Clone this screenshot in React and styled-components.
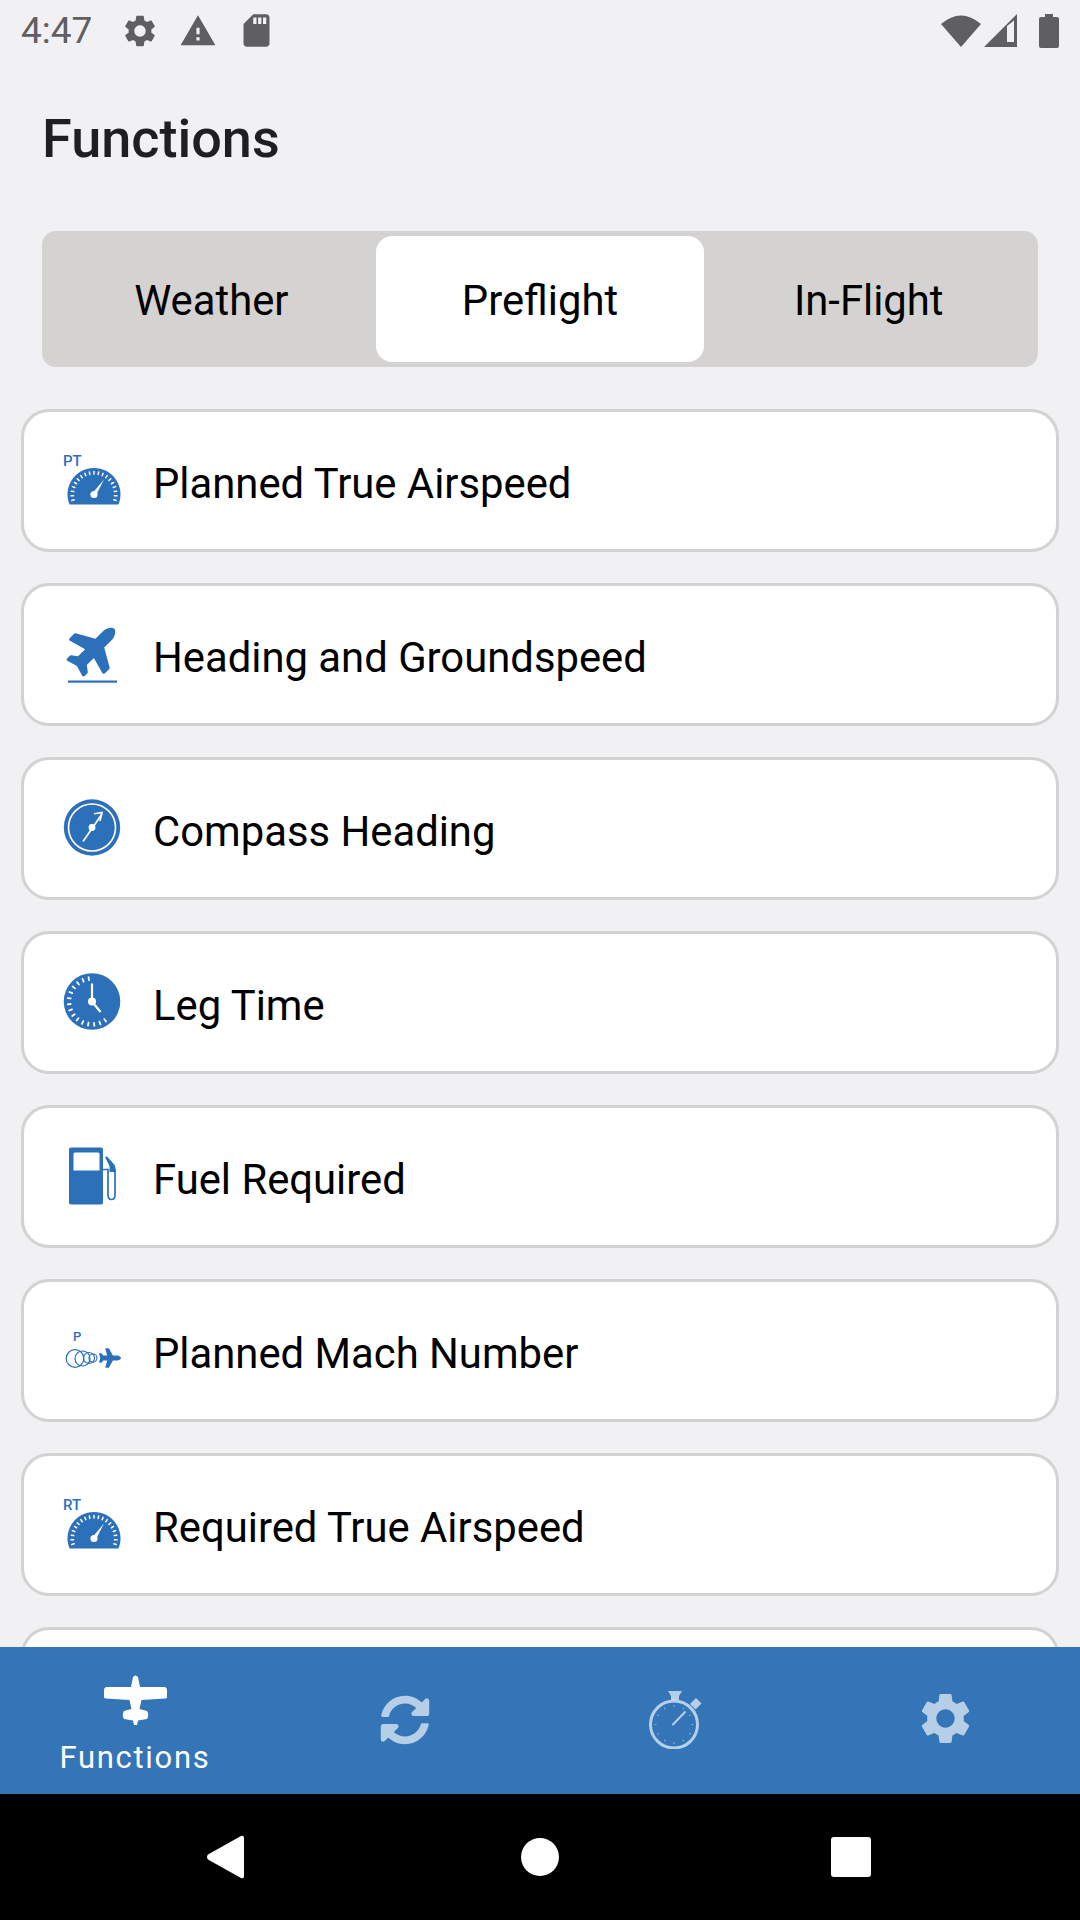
import React from 'react';
import styled, { createGlobalStyle } from 'styled-components';
import { MdSettings, MdWarning, MdSdCard } from 'react-icons/md';
import { FaSyncAlt } from 'react-icons/fa';

const blue = '#2c70b9';
const barBlue = '#3375b7';
const planePath = 'M480 192H365.71L260.61 8.06A16.014 16.014 0 0 0 246.71 0h-65.5c-10.63 0-18.3 10.17-15.38 20.39L214.86 192H112l-43.2-57.6c-3.02-4.03-7.77-6.4-12.8-6.4H16.01C5.6 128-2.04 137.78.49 147.88L32 256 .49 364.12C-2.04 374.22 5.6 384 16.01 384H56c5.04 0 9.78-2.37 12.8-6.4L112 320h102.86l-49.03 171.6c-2.92 10.22 4.75 20.4 15.38 20.4h65.5c5.74 0 11.04-3.08 13.89-8.06L365.71 320H480c35.35 0 96-28.65 96-64s-60.65-64-96-64z';

const GlobalStyle = createGlobalStyle`
  html, body {
    margin: 0;
    padding: 0;
    background: #f1f0f2;
  }
  * {
    box-sizing: border-box;
  }
`;

const Screen = styled.div`
  width: 1080px;
  height: 1920px;
  display: flex;
  flex-direction: column;
  overflow: hidden;
  background: #f1f0f2;
  font-family: Roboto, "Liberation Sans", sans-serif;
`;

const StatusBar = styled.div`
  height: 60px;
  flex: none;
  display: flex;
  align-items: center;
  justify-content: space-between;
  padding: 1px 21px 0 21px;
  color: #5f5e60;
`;

const StatusGroup = styled.div`
  display: flex;
  align-items: center;
  gap: ${({ $gap }) => $gap}px;
`;

const Clock = styled.span`
  font-size: 37px;
  line-height: 60px;
  width: 72px;
  margin-right: 8px;
`;

const Battery = styled.svg`
  margin-left: 19px;
`;

const Title = styled.h1`
  margin: 0;
  padding: 48px 0 0 42px;
  height: 171px;
  flex: none;
  font-size: 54px;
  line-height: 62px;
  font-weight: 500;
  color: #1f1f21;
`;

const Segments = styled.div`
  flex: none;
  height: 136px;
  margin: 0 42px;
  padding: 5px;
  display: flex;
  justify-content: center;
  background: #d5d2d2;
  border-radius: 14px;
`;

const Segment = styled.div`
  width: 329px;
  display: flex;
  align-items: center;
  justify-content: center;
  padding-top: 2px;
  font-size: 41.8px;
  color: #000;
  border-radius: 16px;
  background: ${({ $active }) => ($active ? '#fff' : 'transparent')};
`;

const List = styled.div`
  flex: 1;
  min-height: 0;
  overflow: hidden;
  display: flex;
  flex-direction: column;
  gap: 31px;
  padding: 42px 21px 0;
`;

const Card = styled.div`
  flex: none;
  height: 143px;
  display: flex;
  align-items: center;
  background: #fff;
  border: 3px solid #d3d1d1;
  border-radius: 28px;
  padding-left: 42px;
`;

const CardTitle = styled.span`
  padding-top: 5px;
  font-size: 41.8px;
  color: #000;
`;

const CardIcon = styled.svg`
  width: 60px;
  height: 60px;
  flex: none;
  margin-right: 27px;
  overflow: visible;
`;

const TabBar = styled.div`
  flex: none;
  height: 147px;
  display: grid;
  grid-template-columns: repeat(4, 1fr);
  background: ${barBlue};
`;

const Tab = styled.div`
  display: flex;
  flex-direction: column;
  align-items: center;
  padding-top: ${({ $top }) => $top}px;
  color: ${({ $active }) => ($active ? '#fff' : 'rgba(255,255,255,0.65)')};
`;

const TabLabel = styled.span`
  font-size: 31px;
  line-height: 36px;
  margin-top: 15px;
  letter-spacing: 1.7px;
  color: #fff;
`;

const NavBar = styled.div`
  flex: none;
  height: 126px;
  background: #000;
  display: grid;
  grid-template-columns: 1fr 1fr 1fr;
  align-items: center;
  justify-items: center;
  padding: 0 68px;
`;

const Ring = styled.div`
  width: 38px;
  height: 38px;
  border-radius: 50%;
  background: #fff;
`;

const Square = styled.div`
  width: 40px;
  height: 40px;
  margin-right: 8px;
  border-radius: 3px;
  background: #fff;
`;

const ticks = (cx, cy, r1, r2, from, to, n) =>
  Array.from({ length: n }, (_, i) => {
    const a = ((from + ((to - from) * i) / (n - 1)) * Math.PI) / 180;
    return (
      <line
        key={i}
        x1={cx + r1 * Math.cos(a)}
        y1={cy + r1 * Math.sin(a)}
        x2={cx + r2 * Math.cos(a)}
        y2={cy + r2 * Math.sin(a)}
      />
    );
  });

const Gauge = ({ label }) => (
  <CardIcon viewBox="0 0 60 60">
    <text x="-3" y="14.5" fontSize="15" fontWeight="500" fill={blue} fontFamily="Roboto, sans-serif">{label}</text>
    <path d="M3.5 53.5 A26.5 26.5 0 1 1 52.5 53.5 Z" fill={blue} />
    <g stroke="#fff" strokeWidth="1.5" strokeLinecap="round">
      {ticks(28, 43.5, 20.5, 23, 165, 375, 19)}
    </g>
    <path d="M26.2 42.5 L38 28.5 L29.8 44.5 Z" fill="#fff" />
    <circle cx="28" cy="43.5" r="3.6" fill="#fff" />
  </CardIcon>
);

const Takeoff = () => (
  <CardIcon viewBox="0 0 60 60">
    <g transform="translate(28.5 23.5) rotate(-45) scale(0.097) translate(-288 -256)">
      <path d={planePath} fill={blue} />
    </g>
    <rect x="2" y="55.5" width="49" height="2.2" fill={blue} />
  </CardIcon>
);

const Compass = () => (
  <CardIcon viewBox="0 0 60 60">
    <circle cx="26" cy="28.5" r="28.2" fill={blue} />
    <circle cx="26" cy="28.5" r="23.5" fill="none" stroke="#fff" strokeWidth="1.6" />
    <path d="M17 42.5 L36 15" stroke="#fff" strokeWidth="1.7" />
    <path d="M28 14.8 L36 13.5 L34 22" fill="none" stroke="#fff" strokeWidth="1.6" />
    <circle cx="26" cy="28.5" r="3.4" fill="#fff" />
  </CardIcon>
);

const LegTime = () => (
  <CardIcon viewBox="0 0 60 60">
    <circle cx="26" cy="28.5" r="28.3" fill={blue} />
    <g stroke="#fff" strokeWidth="1.8" strokeLinecap="round">
      {ticks(26, 28.5, 21.5, 24.5, 262, 55, 15)}
    </g>
    <path d="M26 28.5 V10.5 M26 28.5 L34.5 39" stroke="#fff" strokeWidth="2.2" />
    <circle cx="26" cy="28.5" r="4" fill="#fff" />
  </CardIcon>
);

const Fuel = () => (
  <CardIcon viewBox="0 0 60 60">
    <path d="M3 2.5 Q3 0.5 5 0.5 H35 Q37 0.5 37 2.5 V55.5 Q37 57.5 35 57.5 H5 Q3 57.5 3 55.5 Z" fill={blue} />
    <path d="M7.5 7 Q7.5 5.5 9 5.5 H32 Q33.5 5.5 33.5 7 V23.5 H7.5 Z" fill="#fff" />
    <path d="M37 22.5 H42 V48 Q42 52.5 45.5 52.5 Q49 52.5 49 48 V22" fill="none" stroke={blue} strokeWidth="1.7" />
    <path d="M39 10 L41 9.5 L46 15 Q49.5 18 49.5 21 V25 H43.5 V19 Z" fill={blue} />
  </CardIcon>
);

const Mach = () => (
  <CardIcon viewBox="0 0 60 60">
    <text x="7" y="19.5" fontSize="13" fontWeight="500" fill={blue} fontFamily="Roboto, sans-serif">P</text>
    <g fill="none" stroke={blue} strokeWidth="1.2">
      <circle cx="9" cy="37.5" r="8.8" />
      <circle cx="16.5" cy="37.5" r="7.5" />
      <circle cx="23" cy="37" r="5.5" />
      <circle cx="27" cy="37" r="4" />
    </g>
    <g transform="translate(44 37) scale(0.038) translate(-288 -256)">
      <path d={planePath} fill={blue} />
    </g>
  </CardIcon>
);

const Cessna = () => (
  <svg width="63" height="50" viewBox="0 0 63 50" fill="#fff">
    <path d="M29 2 Q31.5 -1 34 2 L36 12 H61 Q63 13 63 15 V22 Q63 23.5 61 23.5 L37.5 25 L35.5 34 L43 36 Q45.5 40 43 44 L34 45.5 L33 50 H30 L29 45.5 L20 44 Q17.5 40 20 36 L27.5 34 L25.5 25 L2 23.5 Q0 23.5 0 22 V15 Q0 13 2 12 H27 Z" />
  </svg>
);

const Stopwatch = () => (
  <svg width="53" height="59" viewBox="0 0 53 59" fill="none" stroke="currentColor">
    <circle cx="25" cy="34.5" r="23.5" strokeWidth="3" />
    <path d="M19 1 H33 L30 6 V10 H22 V6 Z" fill="currentColor" stroke="none" />
    <path d="M41 14 L47 8 L52.5 13.5 L46.5 19.5 Z" fill="currentColor" stroke="none" />
    <path d="M24 34.5 L36 22" strokeWidth="2" strokeLinecap="round" />
    <g strokeWidth="1.2" strokeLinecap="round" opacity="0.6">{ticks(25, 34.5, 18, 19, 0, 330, 12)}</g>
  </svg>
);

const tabs = ['Weather', 'Preflight', 'In-Flight'];

const rows = [
  { title: 'Planned True Airspeed', icon: <Gauge label="PT" /> },
  { title: 'Heading and Groundspeed', icon: <Takeoff /> },
  { title: 'Compass Heading', icon: <Compass /> },
  { title: 'Leg Time', icon: <LegTime /> },
  { title: 'Fuel Required', icon: <Fuel /> },
  { title: 'Planned Mach Number', icon: <Mach /> },
  { title: 'Required True Airspeed', icon: <Gauge label="RT" /> },
  { title: '', icon: null },
];

export default function App() {
  return (
    <Screen>
      <GlobalStyle />
      <StatusBar>
        <StatusGroup $gap={20}>
          <Clock>4:47</Clock>
          <MdSettings size={38} />
          <MdWarning size={38} />
          <MdSdCard size={39} />
        </StatusGroup>
        <StatusGroup $gap={3}>
          <svg width="40" height="33" viewBox="0 0 40 33" fill="currentColor">
            <path d="M0 10 Q20 -7 40 10 L20 33 Z" />
          </svg>
          <svg width="33" height="33" viewBox="0 0 33 33" fill="currentColor">
            <path fillRule="evenodd" d="M0 33 L33 0 V33 Z M23 12 V28 H30 V6.5 Z" />
          </svg>
          <Battery width="20" height="34" viewBox="0 0 20 34" fill="currentColor">
            <path d="M6 0 H14 V3 H18 Q20 3 20 5 V32 Q20 34 18 34 H2 Q0 34 0 32 V5 Q0 3 2 3 H6 Z" />
          </Battery>
        </StatusGroup>
      </StatusBar>
      <Title>Functions</Title>
      <Segments>
        {tabs.map(t => (
          <Segment key={t} $active={t === 'Preflight'}>{t}</Segment>
        ))}
      </Segments>
      <List>
        {rows.map((r, i) => (
          <Card key={i}>
            {r.icon}
            <CardTitle>{r.title}</CardTitle>
          </Card>
        ))}
      </List>
      <TabBar>
        <Tab $active $top={28}>
          <Cessna />
          <TabLabel>Functions</TabLabel>
        </Tab>
        <Tab $top={48}><FaSyncAlt size={50} /></Tab>
        <Tab $top={43}><Stopwatch /></Tab>
        <Tab $top={41}><MdSettings size={61} /></Tab>
      </TabBar>
      <NavBar>
        <svg width="38" height="44" viewBox="0 0 38 44" fill="#fff">
          <path d="M38 3 V41 Q38 44 35 43 L2 24.5 Q0 22 2 19.5 L35 1 Q38 0 38 3 Z" />
        </svg>
        <Ring />
        <Square />
      </NavBar>
    </Screen>
  );
}
